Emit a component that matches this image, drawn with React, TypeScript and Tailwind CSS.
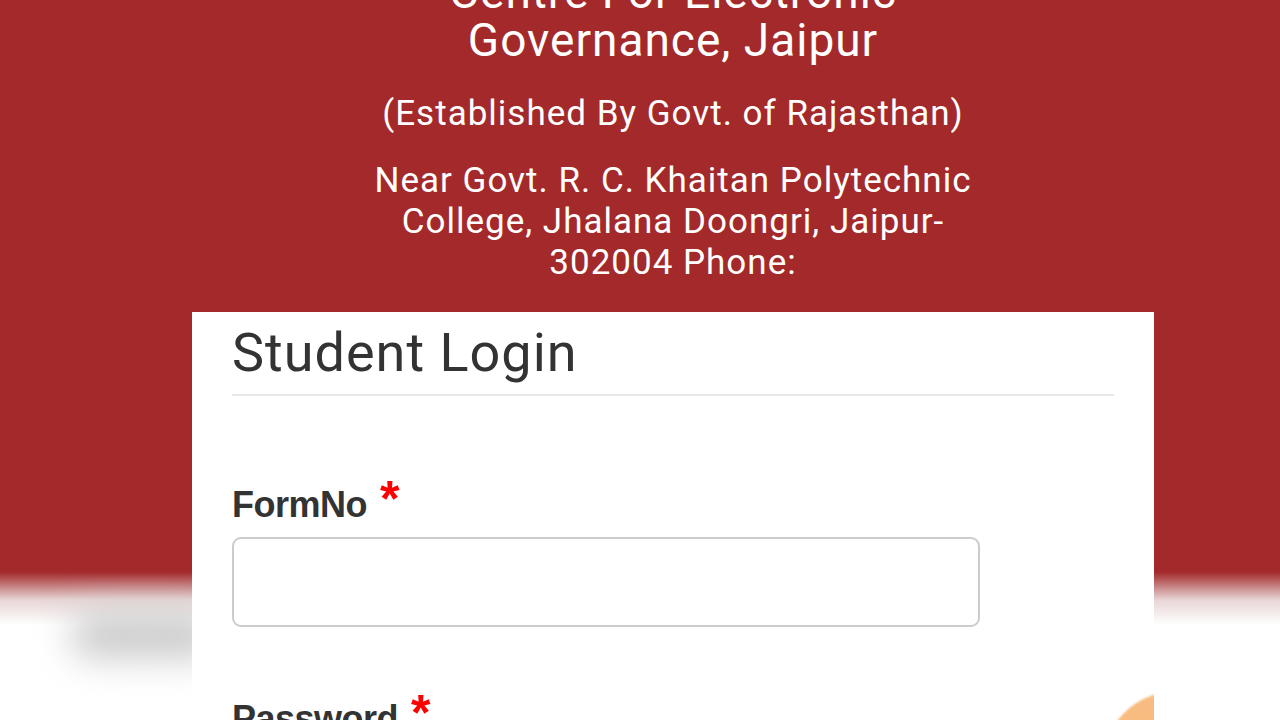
import React from "react";

export default function App() {
  return (
    <div className="relative h-[720px] w-[1280px] overflow-hidden bg-[linear-gradient(to_bottom,#a3292a_0px,#a3292a_572px,#e8d6d6_600px,#ffffff_625px)] font-['Roboto','Liberation_Sans',sans-serif]">
      {/* smudge from the capture, bottom left */}
      <div className="absolute left-[70px] top-[612px] h-[46px] w-[150px] rounded-full bg-[#cacaca] blur-[18px]" />

      <div className="relative ml-[192px] flex w-[962px] flex-col">
        <header className="-mt-[32px] flex flex-col items-center text-center text-white">
          <h1 className="text-[46px] leading-[48px] tracking-[1px]">
            Centre For Electronic
            <br />
            Governance, Jaipur
          </h1>
          <p className="mt-[29px] text-[35px] leading-[42px] tracking-[1px]">
            (Established By Govt. of Rajasthan)
          </p>
          <p className="mt-[25px] w-[640px] text-[35px] leading-[41px] tracking-[1px]">
            Near Govt. R. C. Khaitan Polytechnic College, Jhalana Doongri, Jaipur-<wbr />302004 Phone:
          </p>
        </header>

        <section className="relative mt-[29px] h-[460px] overflow-hidden bg-white px-[40px]">
          <h2 className="pt-[9px] text-[54px] leading-[64px] tracking-[1px] text-[#333]">Student Login</h2>
          <div className="mt-[9px] h-[2px] bg-[#e8e8e8]" />

          <div className="mt-[87px] font-['Liberation_Sans',Arial,sans-serif]">
            <label className="flex items-start gap-[13px] text-[36px] font-bold leading-[44px] tracking-[-0.5px] text-[#333]">
              FormNo
              <span className="relative -top-[6px] text-[50px] leading-[44px] text-[#ff0000]">*</span>
            </label>
            <div className="mt-[10px] h-[90px] w-[748px] rounded-[9px] border-2 border-[#cccccc] bg-white" />

            <label className="mt-[70px] flex items-start gap-[13px] text-[36px] font-bold leading-[44px] tracking-[-0.5px] text-[#333]">
              Password
              <span className="relative -top-[6px] text-[50px] leading-[44px] text-[#ff0000]">*</span>
            </label>
          </div>

          <div className="absolute right-[-90px] top-[380px] h-[140px] w-[140px] rounded-full bg-[#f8bc80] blur-[1px]" />
        </section>
      </div>
    </div>
  );
}
